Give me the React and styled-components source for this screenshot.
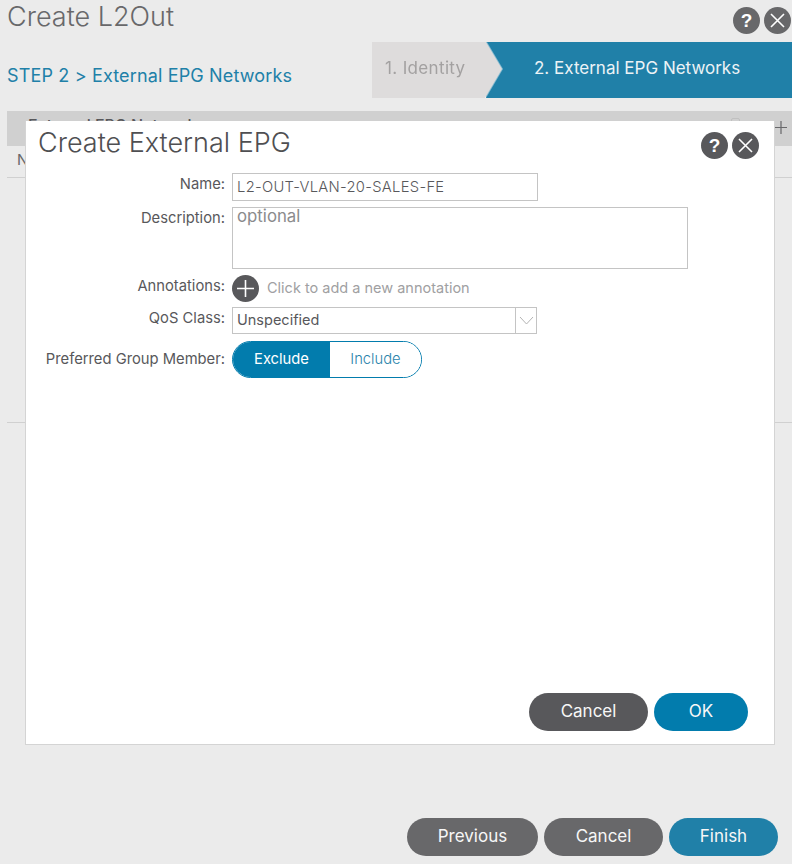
import React from 'react';
import styled, { createGlobalStyle } from 'styled-components';

const GlobalStyle = createGlobalStyle`
  html, body {
    margin: 0;
    padding: 0;
    background: #ebebeb;
    font-family: Inter, 'Liberation Sans', Arial, sans-serif;
  }
`;

const Page = styled.div`
  position: relative;
  width: 792px;
  height: 864px;
  overflow: hidden;
  display: flex;
  flex-direction: column;
  background: #ebebeb;
`;

const Header = styled.header`
  display: flex;
  justify-content: space-between;
  height: 42px;
  padding: 0 1px 0 7px;
`;

const PageTitle = styled.h1`
  margin: 0;
  font-size: 27px;
  font-weight: 300;
  line-height: 34px;
  color: #68686a;
`;

const IconRow = styled.div`
  display: flex;
  gap: 4px;
  padding-top: ${props => props.$top}px;
`;

const RoundIcon = styled.span`
  display: flex;
  align-items: center;
  justify-content: center;
  width: 27px;
  height: 27px;
  border-radius: 50%;
  background: ${props => props.$light ? '#68686a' : '#58585b'};
  color: white;
  font-family: 'Liberation Sans', Arial, sans-serif;
  font-size: 19px;
  font-weight: bold;
`;

const StepRow = styled.div`
  display: flex;
  justify-content: space-between;
  height: 56px;
  padding-left: 7px;
`;

const StepLabel = styled.h2`
  margin: 0;
  font-size: 18px;
  font-weight: 400;
  letter-spacing: 0.15px;
  line-height: 68px;
  color: #2080a8;
`;

const Steps = styled.div`
  display: flex;
  width: 420px;
`;

const IdentityEdge = styled.div`
  position: relative;
  z-index: 1;
  margin-right: -16px;
  filter: drop-shadow(1px 0 0 rgba(255, 255, 255, 0.45));
`;

const IdentityStep = styled.div`
  width: 130px;
  height: 56px;
  padding-left: 13px;
  box-sizing: border-box;
  clip-path: polygon(0 0, 114px 0, 130px 27px, 113px 100%, 0 100%);
  background: #dedcdc;
  color: #a3a1a1;
  font-size: 17px;
  letter-spacing: 0.35px;
  line-height: 53px;
`;

const NetworksStep = styled.div`
  flex: 1;
  padding-left: 48px;
  background: #2080a8;
  color: #ecf3f6;
  font-size: 17px;
  line-height: 53px;
`;

const Table = styled.section`
  flex: 1;
  margin: 13px 0 0 7px;
`;

const TableBar = styled.div`
  position: relative;
  display: flex;
  justify-content: space-between;
  height: 35px;
  box-sizing: border-box;
  padding: 6px 3px 0 21px;
  background: #d0d0d0;
  color: #58585b;
  font-size: 16px;
  font-weight: 500;
  line-height: 17px;
`;

const BarHandle = styled.span`
  position: absolute;
  top: 7px;
  right: 52px;
  width: 7px;
  height: 8px;
  border: 1px solid #c0c0c0;
  border-radius: 2px;
`;

const TablePlusSlot = styled.span`
  margin-top: -6px;
`;

const TableColumn = styled.div`
  height: 31px;
  padding-left: 10px;
  border-bottom: 1px solid #d0d0d0;
  color: #68686a;
  font-size: 15px;
  line-height: 28px;
`;

const TableBody = styled.div`
  height: 244px;
  border-bottom: 1px solid #d0d0d0;
`;

const Footer = styled.footer`
  display: flex;
  justify-content: flex-end;
  gap: 6px;
  padding: 0 14px 8px 0;
`;

const Button = styled.button`
  width: ${props => props.$width}px;
  height: 38px;
  padding: 0 0 2px;
  border: 0;
  border-radius: 19px;
  background: ${props => props.$bg};
  color: #f7f7f7;
  font-family: inherit;
  font-size: 17px;
  font-weight: 400;
`;

const Modal = styled.section`
  position: absolute;
  top: 121px;
  left: 25px;
  width: 750px;
  height: 624px;
  box-sizing: border-box;
  display: flex;
  flex-direction: column;
  background: white;
  border: 1px solid #d4d4d4;
  border-top: 0;
`;

const ModalHeader = styled.div`
  display: flex;
  justify-content: space-between;
  height: 52px;
  padding: 0 15px 0 12px;
`;

const ModalTitle = styled.h2`
  margin: 0;
  font-size: 27px;
  font-weight: 300;
  line-height: 44px;
  color: #4f4f52;
`;

const Form = styled.div`
  flex: 1;
  display: grid;
  grid-template-columns: 199px 1fr;
  column-gap: 7px;
  grid-auto-rows: min-content;
  row-gap: 6px;
  color: #58585b;
  font-size: 14.75px;
`;

const Label = styled.label`
  text-align: right;
  line-height: 22px;
  white-space: nowrap;
  margin-top: ${props => props.$top || 0}px;
`;

const Input = styled.div`
  width: 306px;
  height: 28px;
  box-sizing: border-box;
  padding-left: 4px;
  border: 1px solid #c4c4c4;
  font-weight: 300;
  letter-spacing: 0.3px;
  line-height: 26px;
`;

const TextArea = styled.div`
  width: 456px;
  height: 62px;
  box-sizing: border-box;
  padding-left: 4px;
  border: 1px solid #c4c4c4;
  color: #8b8b8d;
  font-size: 16.8px;
  line-height: 17px;
`;

const AnnotationRow = styled.div`
  display: flex;
  align-items: center;
  gap: 8px;
  height: 25px;
  margin-top: 1px;
  color: #a0a0a2;
  font-size: 14.5px;
`;

const AnnotationHint = styled.span`
  padding-bottom: 2px;
`;

const Select = styled.div`
  display: flex;
  justify-content: space-between;
  width: 305px;
  height: 27px;
  box-sizing: border-box;
  padding-left: 4px;
  border: 1px solid #c4c4c4;
  font-size: 14.5px;
  line-height: 23px;
`;

const Caret = styled.span`
  display: flex;
  align-items: center;
  justify-content: center;
  width: 21px;
  box-sizing: border-box;
  border-left: 1px solid #c4c4c4;
`;

const Toggle = styled.div`
  display: flex;
  width: 190px;
  height: 37px;
  margin-top: 1px;
  box-sizing: border-box;
  border: 1px solid #027cad;
  border-radius: 19px;
  overflow: hidden;
`;

const ToggleOption = styled.span`
  flex: ${props => props.$on ? '0 0 97px' : 1};
  background: ${props => props.$on ? '#027cad' : 'white'};
  color: ${props => props.$on ? 'white' : '#2a83ab'};
  font-weight: ${props => props.$on ? 400 : 300};
  text-align: center;
  line-height: 34px;
`;

const ModalActions = styled.div`
  display: flex;
  justify-content: flex-end;
  gap: 6px;
  padding: 0 26px 13px 0;
`;

const Close = () => (
  <svg width="17" height="17" viewBox="0 0 17 17">
    <path d="M2 2 L15 15 M15 2 L2 15" stroke="white" strokeWidth="1.6" />
  </svg>
);

const Plus = () => (
  <svg width="17" height="17" viewBox="0 0 17 17">
    <path d="M0 8.5 H17 M8.5 0 V17" stroke="white" strokeWidth="1.6" />
  </svg>
);

const Chevron = () => (
  <svg width="15" height="9" viewBox="0 0 15 9" fill="none">
    <path d="M1 1 L7.5 8 L14 1" stroke="#b4b4b4" strokeWidth="1" />
  </svg>
);

const TablePlus = () => (
  <svg width="15" height="35" viewBox="0 0 15 35">
    <path d="M1 16.5 H13 M7 10 V23" stroke="#68686a" strokeWidth="1.2" fill="none" />
  </svg>
);

export default function App() {
  return (
    <Page>
      <GlobalStyle />
      <Header>
        <PageTitle>Create L2Out</PageTitle>
        <IconRow $top={7}>
          <RoundIcon $light>?</RoundIcon>
          <RoundIcon $light><Close /></RoundIcon>
        </IconRow>
      </Header>
      <StepRow>
        <StepLabel>STEP 2 &gt; External EPG Networks</StepLabel>
        <Steps>
          <IdentityEdge>
            <IdentityStep>1. Identity</IdentityStep>
          </IdentityEdge>
          <NetworksStep>2. External EPG Networks</NetworksStep>
        </Steps>
      </StepRow>
      <Table>
        <TableBar>
          External EPG Networks
          <BarHandle />
          <TablePlusSlot><TablePlus /></TablePlusSlot>
        </TableBar>
        <TableColumn>Name</TableColumn>
        <TableBody />
      </Table>
      <Footer>
        <Button $width={131} $bg="#68686a">Previous</Button>
        <Button $width={119} $bg="#68686a">Cancel</Button>
        <Button $width={109} $bg="#2080a8">Finish</Button>
      </Footer>

      <Modal>
        <ModalHeader>
          <ModalTitle>Create External EPG</ModalTitle>
          <IconRow $top={11}>
            <RoundIcon>?</RoundIcon>
            <RoundIcon><Close /></RoundIcon>
          </IconRow>
        </ModalHeader>
        <Form>
          <Label>Name:</Label>
          <Input>L2-OUT-VLAN-20-SALES-FE</Input>
          <Label>Description:</Label>
          <TextArea>optional</TextArea>
          <Label>Annotations:</Label>
          <AnnotationRow>
            <RoundIcon><Plus /></RoundIcon>
            <AnnotationHint>Click to add a new annotation</AnnotationHint>
          </AnnotationRow>
          <Label>QoS Class:</Label>
          <Select>
            Unspecified
            <Caret><Chevron /></Caret>
          </Select>
          <Label $top={8}>Preferred Group Member:</Label>
          <Toggle>
            <ToggleOption $on>Exclude</ToggleOption>
            <ToggleOption>Include</ToggleOption>
          </Toggle>
        </Form>
        <ModalActions>
          <Button $width={119} $bg="#58585b">Cancel</Button>
          <Button $width={94} $bg="#027cad">OK</Button>
        </ModalActions>
      </Modal>
    </Page>
  );
}
